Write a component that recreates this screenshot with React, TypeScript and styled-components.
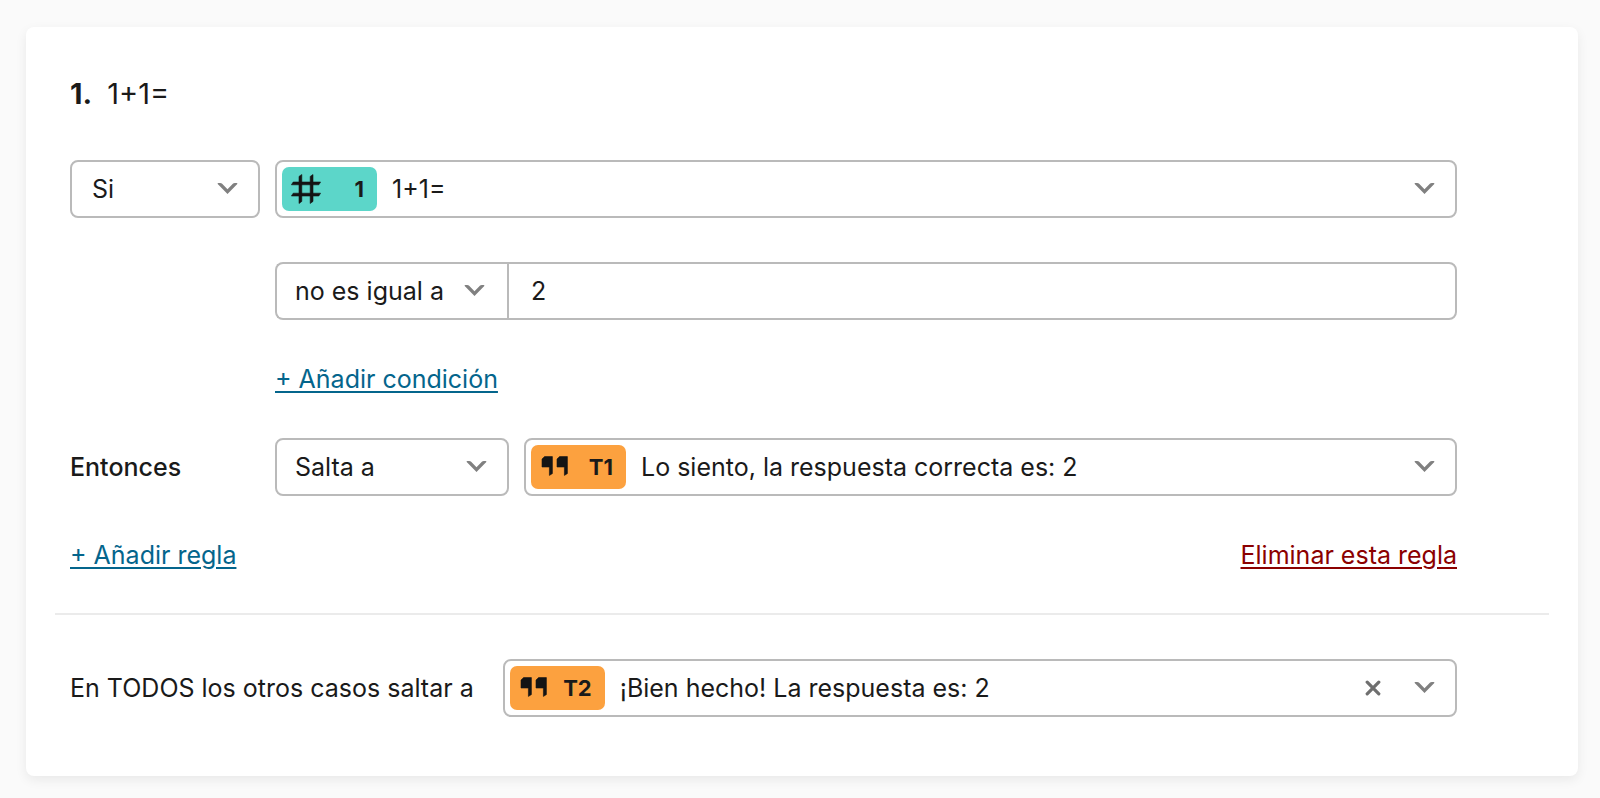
import React from "react";
import styled, { createGlobalStyle } from "styled-components";

const GlobalStyle = createGlobalStyle`
  *, *::before, *::after { box-sizing: border-box; }
  body {
    margin: 0;
    background: #fafafa;
    color: #1a1a1a;
    font-family: Inter, "Liberation Sans", sans-serif;
    font-size: 25px;
    line-height: 30px;
  }
`;

const Page = styled.main`
  padding: 27px 22px 22px 26px;
`;

const Card = styled.section`
  padding: 45px 29px 59px;
  background: #fff;
  border-radius: 8px;
  box-shadow: 0 4px 12px rgba(0, 0, 0, 0.07);
`;

const Section = styled.div`
  display: flex;
  flex-direction: column;
  gap: 44px;
  padding: 0 92px 0 15px;
`;

const Title = styled.h2`
  display: flex;
  gap: 15px;
  margin: 0;
  font-size: 29px;
  font-weight: 400;
  line-height: 44px;
`;

const Row = styled.div<{ $gap?: number }>`
  display: flex;
  align-items: center;
  gap: ${(p) => p.$gap ?? 15}px;
`;

const RuleGrid = styled.div`
  display: grid;
  grid-template-columns: 190px minmax(0, 1fr);
  align-items: center;
  gap: 44px 15px;
`;

const SecondColumn = styled.div`
  grid-column: 2;
`;

const Label = styled.label<{ $strong?: boolean }>`
  flex: none;
  font-weight: ${(p) => (p.$strong ? 500 : 400)};
`;

const Field = styled.div<{ $width?: number; $chip?: boolean; $join?: boolean }>`
  position: relative;
  display: flex;
  align-items: center;
  flex: ${(p) => (p.$width ? `0 0 ${p.$width}px` : "1 1 0")};
  min-width: 0;
  height: 58px;
  padding-left: ${(p) => (p.$chip ? 5 : 0)}px;
  border: 2px solid #bababa;
  border-radius: ${(p) => (p.$join ? "8px 0 0 8px" : "8px")};
  border-right-width: ${(p) => (p.$join ? 0 : 2)}px;
  background: #fff;
`;

const Select = styled.select<{ $inset?: number }>`
  flex: 1;
  min-width: 0;
  height: 100%;
  margin: 0;
  padding: 0 44px 0 ${(p) => p.$inset ?? 18}px;
  appearance: none;
  border: 0;
  border-radius: 6px;
  background: transparent;
  color: inherit;
  font: inherit;
`;

const ValueInput = styled.input`
  flex: 1;
  min-width: 0;
  height: 58px;
  padding: 0 22px;
  border: 2px solid #bababa;
  border-radius: 0 8px 8px 0;
  background: #fff;
  color: inherit;
  font: inherit;
`;

const ChevronIcon = styled.svg<{ $join?: boolean }>`
  position: absolute;
  right: ${(p) => (p.$join ? 22 : 20)}px;
  top: 20px;
  width: 21px;
  height: 13px;
  pointer-events: none;
`;

const ClearButton = styled.button`
  position: absolute;
  right: 70px;
  top: 15px;
  display: grid;
  place-items: center;
  width: 24px;
  height: 24px;
  padding: 0;
  border: 0;
  background: none;
  cursor: pointer;
`;

const Chip = styled.span<{ $color: string }>`
  display: flex;
  align-items: center;
  justify-content: space-between;
  flex: none;
  width: 95px;
  height: 44px;
  padding: 0 13px 0 9px;
  border-radius: 7px;
  background: ${(p) => p.$color};
  font-size: 22px;
  font-weight: 700;
`;

const Link = styled.a<{ $danger?: boolean }>`
  color: ${(p) => (p.$danger ? "#8b0000" : "#04658c")};
  text-decoration: underline;
  text-decoration-thickness: 2px;
  text-underline-offset: 3px;
`;

const Footer = styled(Row)`
  justify-content: space-between;
`;

const Divider = styled.hr`
  height: 2px;
  margin: 43px 0 44px;
  border: 0;
  background: #ebebeb;
`;

const Chevron = ({ join }: { join?: boolean }) => (
  <ChevronIcon $join={join} viewBox="0 0 21 13" aria-hidden="true">
    <path
      d="M.7 1.9Q.2.9 1.4.9H3.2Q4.2.9 4.9 1.5L10.5 7.2 16.1 1.5Q16.8.9 17.8.9H19.6Q20.8.9 20.3 1.9L10.5 12Z"
      fill="#808080"
    />
  </ChevronIcon>
);

const HashIcon = () => (
  <svg width="30" height="30" viewBox="0 0 30 30" aria-hidden="true">
    <path
      d="M8 2.4 10.8.5V27.4L8 29.5ZM19.2 2.4 22 .5V27.4L19.2 29.5ZM2.2 8H29.6L27.8 10.8H.4ZM2.2 19.2H29.6L27.8 22H.4Z"
      fill="#141414"
      stroke="#141414"
      strokeWidth=".6"
      strokeLinejoin="round"
    />
  </svg>
);

const QuoteIcon = () => (
  <svg width="30" height="24" viewBox="0 0 30 24" aria-hidden="true">
    <path
      d="M4.6 1.6H12.4V18.6L9.4 20.4V12H2V4ZM19.6 1.6H27.4V18.6L24.4 20.4V12H17V4Z"
      fill="#141414"
      stroke="#141414"
      strokeWidth=".6"
      strokeLinejoin="round"
    />
  </svg>
);

const CloseIcon = () => (
  <svg width="16" height="16" viewBox="0 0 16 16" aria-hidden="true">
    <path d="M2.2 2.2 13.8 13.8M13.8 2.2 2.2 13.8" stroke="#6f6f6f" strokeWidth="3.2" strokeLinecap="round" />
  </svg>
);

type DropdownProps = {
  id?: string;
  label?: string;
  value: string;
  width?: number;
  inset?: number;
  join?: boolean;
  chip?: React.ReactNode;
  onClear?: () => void;
};

const Dropdown = ({ id, label, value, width, inset, join, chip, onClear }: DropdownProps) => (
  <Field $width={width} $chip={!!chip} $join={join}>
    {chip}
    <Select id={id} aria-label={label} $inset={chip ? 15 : inset} defaultValue={value}>
      <option value={value}>{value}</option>
    </Select>
    {onClear && (
      <ClearButton type="button" aria-label="Borrar" onClick={onClear}>
        <CloseIcon />
      </ClearButton>
    )}
    <Chevron join={join} />
  </Field>
);

export default function App() {
  return (
    <>
      <GlobalStyle />
      <Page>
        <Card>
          <Section>
            <Title>
              <strong>1.</strong>
              <span>1+1=</span>
            </Title>
            <RuleGrid>
              <Dropdown label="Tipo de condición" value="Si" inset={20} />
              <Dropdown
                label="Pregunta"
                value="1+1="
                chip={<Chip $color="#5cd6c9"><HashIcon />1</Chip>}
              />
              <SecondColumn>
                <Row $gap={0}>
                  <Dropdown label="Operador" value="no es igual a" width={232} join />
                  <ValueInput aria-label="Valor" defaultValue="2" />
                </Row>
              </SecondColumn>
              <SecondColumn>
                <Link href="#condicion">+ Añadir condición</Link>
              </SecondColumn>
              <Label htmlFor="accion" $strong>Entonces</Label>
              <Row>
                <Dropdown id="accion" value="Salta a" width={234} />
                <Dropdown
                  label="Destino"
                  value="Lo siento, la respuesta correcta es: 2"
                  chip={<Chip $color="#fca13f"><QuoteIcon />T1</Chip>}
                />
              </Row>
            </RuleGrid>
            <Footer>
              <Link href="#regla">+ Añadir regla</Link>
              <Link href="#eliminar" $danger>Eliminar esta regla</Link>
            </Footer>
          </Section>
          <Divider />
          <Section>
            <Row $gap={29}>
              <Label htmlFor="otros">En TODOS los otros casos saltar a</Label>
              <Dropdown
                id="otros"
                value="¡Bien hecho! La respuesta es: 2"
                chip={<Chip $color="#fca13f"><QuoteIcon />T2</Chip>}
                onClear={() => {}}
              />
            </Row>
          </Section>
        </Card>
      </Page>
    </>
  );
}
